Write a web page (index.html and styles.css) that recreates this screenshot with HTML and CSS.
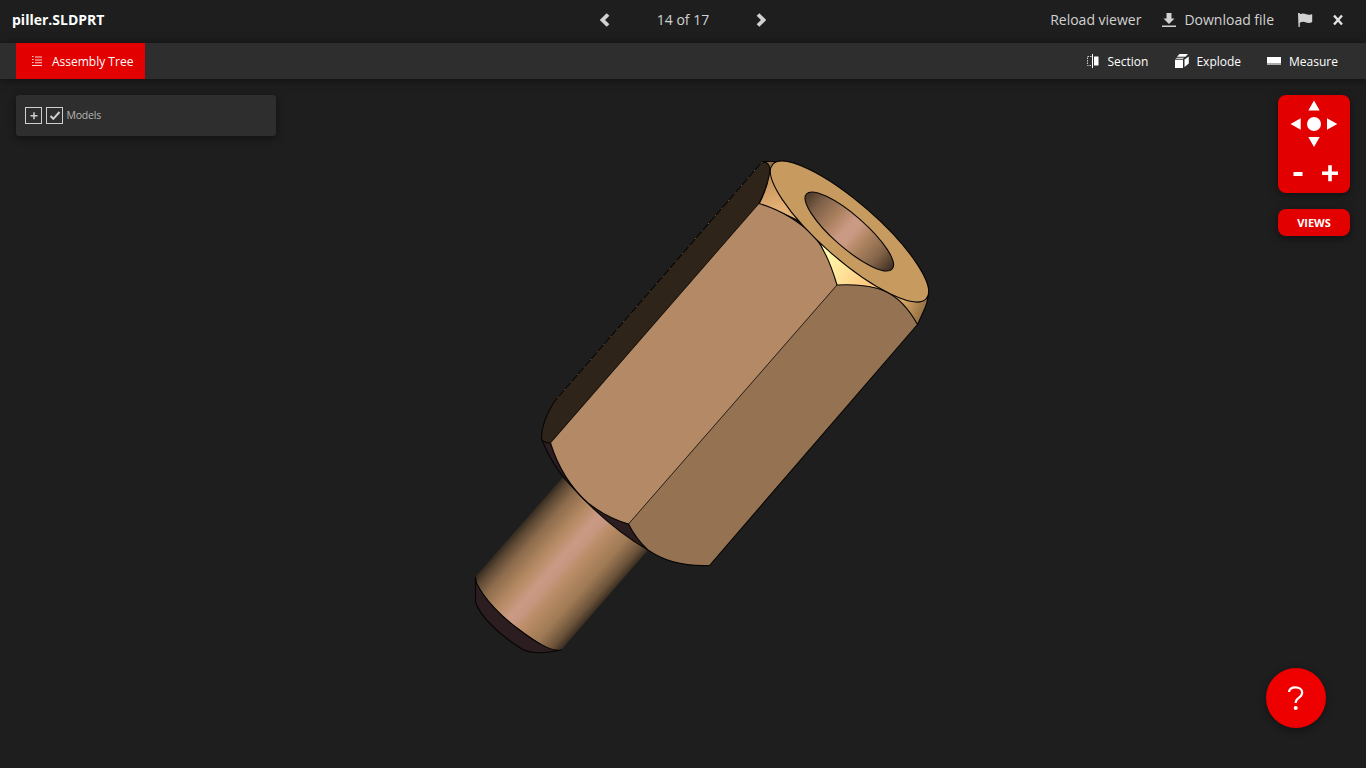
FILE: index.html
```html
<!DOCTYPE html>
<html lang="en">
<head>
<meta charset="utf-8">
<title>piller.SLDPRT</title>
<link rel="stylesheet" href="styles.css">
</head>
<body>
<div class="viewer">
  <header class="header">
    <h1 class="filename">piller.SLDPRT</h1>
    <nav class="pager">
      <svg class="chevron" width="10" height="14" viewBox="0 0 10 14"><path d="M8 1.500 2.500 7 8 12.500"/></svg>
      <span class="pager-text">14 of 17</span>
      <svg class="chevron" width="10" height="14" viewBox="0 0 10 14"><path d="M2 1.500 7.500 7 2 12.500"/></svg>
    </nav>
    <div class="actions">
      <span class="reload">Reload viewer</span>
      <svg class="download-icon" width="14" height="15" viewBox="0 0 14 15"><path d="M4.500 0h5v5.500h3L7 11 1.500 5.500h3zM0 12.500h14V14H0z"/></svg>
      <span class="download">Download file</span>
      <svg class="flag-icon" width="15" height="14" viewBox="0 0 15 14"><path d="M0 0h1.800v1.200C4.500-.1 6.500.5 8.300 1.300c2 .8 3.800.5 5.900-.4v8.200c-2 1-4 1.200-6 .4-2.200-.9-4-.9-6.400.2V14H.5z"/></svg>
      <svg class="close-icon" width="10" height="12" viewBox="0 0 10 12"><path d="M1 1.500 9 10.500M9 1.500 1 10.500"/></svg>
    </div>
  </header>
  <div class="toolbar">
    <div class="tab">
      <svg width="10" height="10" viewBox="0 0 10 10"><path d="M0 0h1.500v1H0zM3 .5h7v1H3zM0 3h1.500v1H0zM3 3.500h7v1H3zM0 6h1.500v1H0zM3 6.300h7v1H3zM0 9h10v1H0z"/></svg>
      <span>Assembly Tree</span>
    </div>
    <div class="tools">
      <div class="tool section">
        <svg width="12" height="14" viewBox="0 0 12 14"><path d="M5.500 0v14" stroke="#fff"/><path d="M7 2.500h4.500v9H7z" fill="#fff"/><path d="M4.500 2.500H.500v9h4" fill="none" stroke="#ccc" stroke-dasharray="1.500 1"/></svg>
        <span>Section</span>
      </div>
      <div class="tool explode">
        <svg width="14" height="14" viewBox="0 0 14 14"><path d="M4.500 0H13L10.500 2.800H2zM0 5.800h8V14H0zM.3 4.800 2 3.800h7L8 4.800zM9.500 5.500 13.800 2.400v7L9.500 13z"/></svg>
        <span>Explode</span>
      </div>
      <div class="tool measure">
        <svg width="14" height="8" viewBox="0 0 14 8"><path fill="#fff" d="M0 0h14v6H0z"/><path fill="#aaa" d="M0 6h14v2H0z"/></svg>
        <span>Measure</span>
      </div>
    </div>
  </div>
  <main class="stage">
    <svg class="model" width="1366" height="689" viewBox="0 79 1366 689">
      <defs>
        <linearGradient id="shaft" gradientUnits="userSpaceOnUse" x1="475" y1="576" x2="562" y2="652">
          <stop offset="0" stop-color="#2f271e"/><stop offset=".07" stop-color="#5d4834"/><stop offset=".17" stop-color="#8c6b4c"/><stop offset=".33" stop-color="#b58a63"/><stop offset=".46" stop-color="#cb9a84"/><stop offset=".53" stop-color="#c79680"/><stop offset=".61" stop-color="#ba8d67"/><stop offset=".78" stop-color="#9f7a55"/><stop offset=".91" stop-color="#6c533a"/><stop offset="1" stop-color="#2e251c"/>
        </linearGradient>
        <linearGradient id="bore" gradientUnits="userSpaceOnUse" x1="792.300" y1="231.500" x2="906.300" y2="231.500">
          <stop offset="0" stop-color="#493726"/><stop offset=".15" stop-color="#80624a"/><stop offset=".32" stop-color="#aa805e"/><stop offset=".46" stop-color="#cb9a84"/><stop offset=".54" stop-color="#ca9983"/><stop offset=".64" stop-color="#b28763"/><stop offset=".83" stop-color="#856549"/><stop offset="1" stop-color="#3c2d20"/>
        </linearGradient>
        <linearGradient id="shine" gradientUnits="userSpaceOnUse" x1="825" y1="258" x2="868" y2="290">
          <stop offset="0" stop-color="#fff8a8"/><stop offset=".4" stop-color="#ffe49b"/><stop offset="1" stop-color="#ffc37b"/>
        </linearGradient>
        <linearGradient id="bevel" gradientUnits="userSpaceOnUse" x1="769" y1="175" x2="780" y2="209">
          <stop offset="0" stop-color="#c18f58"/><stop offset="1" stop-color="#e7b275"/>
        </linearGradient>
        <linearGradient id="rim" gradientUnits="userSpaceOnUse" x1="903" y1="301" x2="927" y2="312">
          <stop offset="0" stop-color="#d9a767"/><stop offset="1" stop-color="#8b693f"/>
        </linearGradient>
      </defs>
      <path fill="url(#shaft)" d="M563 477 476 576Q474 583 478 588C490 607 517 630 543 645Q555 652 562 649L648 550 606 517Z"/>
      <g class="edges">
        <path fill="#2b1d20" d="M475.500 577V602C480 617 501 636 522 649Q535 656 561 650C550 652 534 641 517 628C502 617 484 599 476.500 583Z"/>
        <path fill="#2b1d20" d="M541.500 439 550.500 443 565 476 590 502 628.500 524 648 550C622 535 594 511 572 487Q552 466 541.500 439Z"/>
        <path fill="#2f241a" d="M762 162 554 402Q541 423 541.500 439 544 443 550.500 443L759 204Q768 184 770 173 771 161 762 162Z"/>
        <path fill="#927047" d="M764 161.500H776L770 169Q769 163 764 161.500Z"/>
        <path fill="url(#bevel)" d="M770 170 785 180 820 232Q788 214 759 204Q768 187 770 170Z"/>
        <path fill="url(#shine)" stroke="none" d="M809 231 818 236 837 285 885 290Z"/>
        <path fill="url(#rim)" d="M885 290Q905 306 917.500 324.500L925 308Q929 299 928 286Z"/>
        <path fill="#b48966" stroke="none" d="M759 203.500C784 211 801 223 815 237Q828 254 837 285L628.500 524Q607 518 588 503C571 488 558 467 550.500 443Z"/>
        <path fill="#957352" stroke="none" d="M837 285C878 283 899 291 917.500 324.500L709.500 565.500Q672 567 648 550 636 539 628.500 524Z"/>
        <path fill="none" d="M759 203.500C784 211 801 223 815 237Q828 254 837 285C878 283 899 291 917.500 324.500L709.500 565.500Q672 567 648 550 636 539 628.500 524Q607 518 588 503C571 488 558 467 550.500 443"/>
        <path class="seam" d="M759 203.500 550.500 443M837 285 628.500 524"/>
        <ellipse fill="#c79b60" cx="849.500" cy="231.500" rx="102" ry="28.300" transform="rotate(41.150 849.500 231.500)"/>
        <ellipse fill="url(#bore)" cx="849.300" cy="231.500" rx="57" ry="16.200" transform="rotate(41.150 849.300 231.500)"/>
      </g>
      <path class="glint" d="M761.500 162.500 554.500 401.500"/>
    </svg>
    <section class="tree">
      <svg class="box" width="17" height="17" viewBox="0 0 17 17"><rect x=".5" y=".5" width="16" height="16"/><path stroke-width="1.500" d="M5.500 8.700h7M9 5.200v7"/></svg>
      <svg class="box" width="17" height="17" viewBox="0 0 17 17"><rect x=".5" y=".5" width="16" height="16"/><path stroke-width="2" d="M4.500 9 7.300 11.800 13.500 5"/></svg>
      <span class="tree-label">Models</span>
    </section>
    <aside class="controls">
      <svg class="pad" width="72" height="98" viewBox="0 0 72 98"><path d="M36 5.500 41.700 15.500H30.300zM36 52 41.700 42H30.300zM12.500 29 22.700 23.300V34.700zM59.300 29 49 23.300V34.700z"/><circle cx="36" cy="29" r="7"/><path d="M15.500 77h9v4h-9zM44 76.500h16v3.500H44zM50.200 70.300h3.600V86.300h-3.600z"/></svg>
      <div class="views">VIEWS</div>
    </aside>
    <div class="help">
      <svg width="18" height="26" viewBox="0 0 18 26"><path d="M2 7C2.300 4 5 2.400 8.500 2.400c4 0 6.700 2 6.700 5.200 0 3-1.800 4.300-3.800 5.500-2 1.300-2.700 2.100-2.700 5" fill="none" stroke="#fff" stroke-width="2.200"/><circle cx="8.700" cy="23" r="2" fill="#fff"/></svg>
    </div>
  </main>
</div>
</body>
</html>
```
FILE: styles.css
```css
* { box-sizing: border-box; }
body { margin: 0; background: #1e1e1e; font-family: "Open Sans", "Noto Sans", sans-serif; }
svg { display: block; flex: none; }
.viewer { width: 1366px; height: 768px; display: flex; flex-direction: column; overflow: hidden; }
.header { height: 43px; padding: 0 23px 3px 12px; display: grid; grid-template-columns: 1fr auto 1fr; align-items: center; color: #d2d2d2; font-size: 14px; white-space: nowrap; }
.header span, .filename { line-height: 20px; margin-top: -1px; }
.filename { margin-bottom: 0; color: #fff; font-size: 14px; font-weight: 700; }
.pager { display: flex; align-items: center; gap: 47px; margin-left: 11px; }
.chevron { fill: none; stroke: #d2d2d2; stroke-width: 3.800; }
.actions { display: flex; align-items: center; justify-content: flex-end; }
.reload { margin-right: 21px; }
.download-icon { margin-right: 8px; }
.download { margin-right: 24px; }
.flag-icon { margin-right: 20px; }
.download-icon, .flag-icon { fill: #d2d2d2; }
.close-icon { stroke: #e2e2e2; stroke-width: 2.400; }
.toolbar { height: 36px; padding: 0 28px 0 16px; display: flex; justify-content: space-between; background: #2e2e2e; color: #fff; font-size: 12px; box-shadow: 0 1px 8px rgba(0,0,0,.5); position: relative; z-index: 1; }
.tab { width: 129px; padding-left: 16px; display: flex; align-items: center; gap: 10px; background: #e30000; }
.tab svg { fill: #ffd0d0; }
.tools { display: flex; gap: 26px; }
.tool { display: flex; align-items: center; gap: 8px; }
.section { gap: 9px; }
.explode { gap: 7px; margin-left: 1px; }
.explode svg { fill: #fff; }
.stage { flex: 1; position: relative; }
.model { position: absolute; inset: 0; }
.edges { stroke: #070604; stroke-width: 1.1; stroke-linejoin: round; }
.edges .seam { fill: none; stroke-width: .7; }
.glint { stroke: #a47e58; stroke-width: 1; stroke-dasharray: 1 9; fill: none; }
.tree { position: absolute; left: 16px; top: 16px; width: 260px; height: 41px; padding-left: 9px; display: flex; align-items: center; gap: 4px; background: #2e2e2e; border-radius: 3px; box-shadow: 0 2px 8px rgba(0,0,0,.45); }
.box { fill: none; stroke: #cfcfcf; }
.tree-label { font-size: 10.5px; letter-spacing: -.2px; line-height: 15px; margin-left: -.5px; color: #b5b5b5; }
.controls { position: absolute; right: 16px; top: 16px; width: 72px; display: flex; flex-direction: column; gap: 16px; }
.pad, .views { background: #e30000; border-radius: 8px; box-shadow: 0 2px 8px rgba(0,0,0,.5); }
.pad { fill: #fff; }
.views { height: 27px; line-height: 27px; text-align: center; color: #fff; font-size: 11px; font-weight: 700; }
.help { position: absolute; right: 40px; bottom: 40px; width: 60px; height: 60px; display: flex; align-items: center; justify-content: center; background: #ee0000; border-radius: 50%; box-shadow: 0 2px 8px rgba(0,0,0,.4); }
```
